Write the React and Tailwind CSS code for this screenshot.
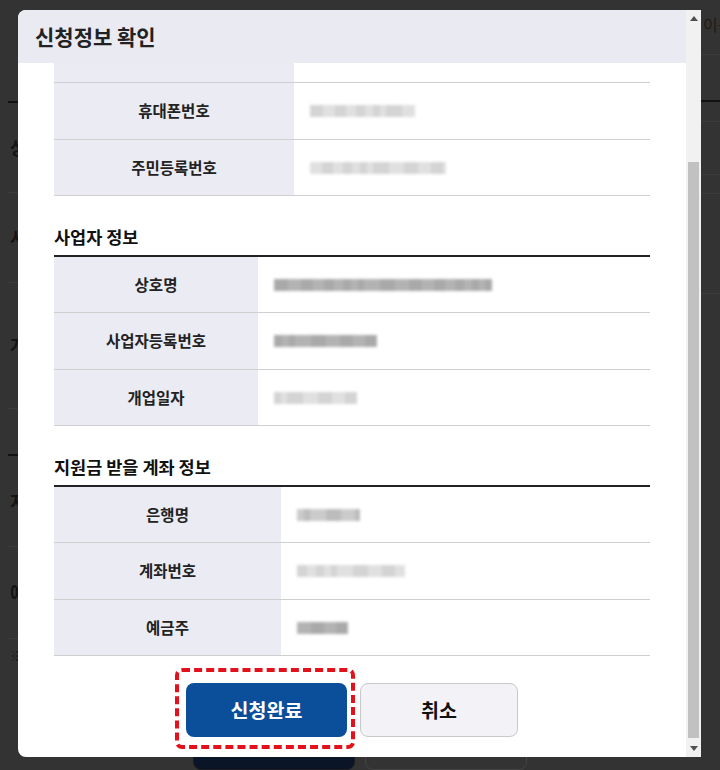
import React from "react";

const FONT = { fontFamily: '"Noto Sans CJK KR", "Noto Sans", sans-serif' };

function Blur({ w, segs }) {
  return (
    <div className="flex h-[14px] items-center blur-[1.6px]" style={{ width: w }}>
      {segs.map((s, i) => (
        <div key={i} className="h-[12px]" style={{ width: s[0], background: s[1] }} />
      ))}
    </div>
  );
}

function mkSegs(w, seed) {
  const cols = ["#bcbcbc", "#d4d4d4", "#a9a9a9", "#cbcbcb", "#e0e0e0", "#b3b3b3"];
  const out = [];
  let left = w;
  let i = seed;
  while (left > 0) {
    const s = Math.min(left, 6 + ((i * 7) % 11));
    out.push([s, cols[i % cols.length]]);
    left -= s;
    i += 3;
  }
  return out;
}

function Row({ label, labelW, valueW, seed, h }) {
  return (
    <div className="flex border-b border-[#cfcfcf]" style={{ height: h }}>
      <div
        className="flex items-center justify-center bg-[#ebebf3] text-[15.5px] font-bold text-[#222]"
        style={{ width: labelW }}
      >
        {label}
      </div>
      <div className="flex flex-1 items-center pl-[16px]">
        <Blur w={valueW} segs={mkSegs(valueW, seed)} />
      </div>
    </div>
  );
}

function Section({ title, labelW, rows }) {
  const hs = [56, 57, 56];
  return (
    <div>
      <div className="mt-[28px] h-[26px] whitespace-nowrap text-[17.5px] font-bold leading-[26px] text-[#111]">
        {title}
      </div>
      <div className="mt-[5px] border-t-2 border-[#222]">
        {rows.map((r, i) => (
          <Row key={i} label={r[0]} labelW={labelW} valueW={r[1]} seed={i + r[1]} h={hs[i]} />
        ))}
      </div>
    </div>
  );
}

export default function App() {
  return (
    <div className="relative h-[770px] w-[720px] overflow-hidden bg-[#333333]" style={FONT}>
      {/* background page (dimmed) */}
      <div className="flex h-full w-full">
        <div className="flex flex-1 flex-col pl-[8px] text-[18px] font-bold text-[#141414]">
          <div className="h-[103px] border-b-2 border-[#111]" />
          <div className="flex h-[90px] items-center border-b border-[#3c3c3c] pl-[2px]">상호명</div>
          <div className="flex h-[90px] items-center border-b border-[#3c3c3c] pl-[2px]">사업자</div>
          <div className="flex h-[127px] items-center border-b border-[#3c3c3c] pl-[2px]">개업일자</div>
          <div className="h-[47px] border-b-2 border-[#111]" />
          <div className="flex h-[91px] items-center border-b border-[#3c3c3c] pl-[2px]">지원금</div>
          <div className="flex h-[92px] items-center border-b border-[#3c3c3c] pl-[2px]">예금주</div>
          <div className="pl-[2px] pt-[6px] text-[14px] font-normal text-[#1e1e1e]">※ 안내</div>
          <div className="mt-[64px] flex gap-[10px] pl-[185px]">
            <div className="h-[40px] w-[162px] rounded-[8px] border border-[#1d1d1d] bg-[#0a1628]" />
            <div className="h-[40px] w-[162px] rounded-[8px] border border-[#444]" />
          </div>
        </div>
        <div className="flex w-[19px] flex-col overflow-hidden">
          <div className="h-[55px] overflow-hidden whitespace-nowrap border-b border-[#3c3c3c] pl-[2px] pt-[12px] text-[16px] leading-[24px] text-[#1f1a16]">
            이용
          </div>
          <div className="h-[47px] border-b-2 border-[#111]" />
          <div className="h-[20px] border-b border-[#3c3c3c]" />
          <div className="h-[53px] border-b border-[#3c3c3c]" />
          <div className="h-[19px] border-b border-[#3c3c3c]" />
          <div className="h-[100px] border-b border-[#3c3c3c]" />
        </div>
      </div>

      {/* modal */}
      <div className="absolute left-[18px] top-[10px] flex h-[747px] w-[683px] overflow-hidden rounded-l-[8px] bg-white">
        <div className="flex flex-1 flex-col">
          <div className="flex h-[53px] shrink-0 items-center bg-[#eaeaf3] pl-[17px] text-[21px] font-bold text-[#222]">
            신청정보 확인
          </div>
          <div className="flex-1 overflow-hidden px-[36px]">
            <div className="flex h-[20px] border-b border-[#cfcfcf]">
              <div className="w-[240px] bg-[#ebebf3]" />
            </div>
            <Row label="휴대폰번호" labelW={240} valueW={105} seed={1} h={57} />
            <Row label="주민등록번호" labelW={240} valueW={136} seed={4} h={56} />
            <Section
              title="사업자 정보"
              labelW={204}
              rows={[
                ["상호명", 218],
                ["사업자등록번호", 103],
                ["개업일자", 83],
              ]}
            />
            <Section
              title="지원금 받을 계좌 정보"
              labelW={227}
              rows={[
                ["은행명", 63],
                ["계좌번호", 108],
                ["예금주", 51],
              ]}
            />
            <div className="mt-[27px] flex justify-center gap-[13px]">
              <div className="relative">
                <button className="h-[54px] w-[161px] rounded-[8px] bg-[#0b4f9b] text-[19.5px] font-bold text-white">
                  신청완료
                </button>
                <div className="pointer-events-none absolute -bottom-[12px] -left-[11px] -right-[8px] -top-[15px] rounded-[7px] border-[4px] border-dashed border-[#e3111b]" />
              </div>
              <button className="h-[54px] w-[158px] rounded-[8px] border border-[#c9c9c9] bg-[#f3f3f7] text-[19.5px] font-bold text-[#111]">
                취소
              </button>
            </div>
          </div>
        </div>
        {/* scrollbar */}
        <div className="flex w-[15px] flex-col bg-[#f1f1f1]">
          <div className="flex h-[17px] items-center justify-center">
            <svg width="8" height="5" viewBox="0 0 8 5"><path d="M0 5 L4 0 L8 5 Z" fill="#505050" /></svg>
          </div>
          <div className="flex-1">
            <div className="mx-[2px] mt-[135px] h-[576px] bg-[#c1c1c1]" />
          </div>
          <div className="flex h-[17px] items-center justify-center">
            <svg width="8" height="5" viewBox="0 0 8 5"><path d="M0 0 L8 0 L4 5 Z" fill="#505050" /></svg>
          </div>
        </div>
      </div>
    </div>
  );
}
